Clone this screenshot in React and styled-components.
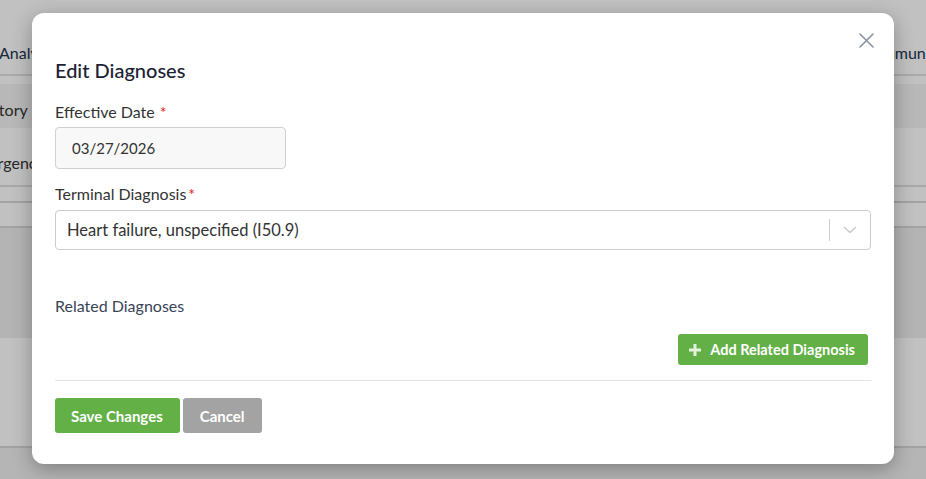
import React from 'react';
import styled, { createGlobalStyle } from 'styled-components';

const GlobalStyle = createGlobalStyle`
  html, body {
    margin: 0;
    padding: 0;
    width: 926px;
    height: 479px;
    overflow: hidden;
    font-family: Lato, "Open Sans", sans-serif;
  }
`;

const Page = styled.div`
  position: relative;
  width: 926px;
  height: 479px;
  overflow: hidden;
  background: #ffffff;
  color: #333;
`;

const Tabs = styled.div`
  display: grid;
  grid-template-columns: 862px auto;
  height: 76px;
  align-items: end;
  padding-bottom: 12px;
  border-bottom: 2px solid #e2e2e2;
  box-sizing: border-box;
  font-size: 16px;
  color: #22344f;
`;

const Tab = styled.div`
  white-space: nowrap;
  margin-left: ${(p) => p.$shift || 0}px;
`;

const SideRow = styled.div`
  height: ${(p) => p.$h}px;
  width: 100%;
  display: flex;
  align-items: center;
  padding-top: ${(p) => p.$pt || 0}px;
  background: ${(p) => p.$bg || 'transparent'};
  border-bottom: ${(p) => (p.$line ? '2px solid #e0e0e0' : 'none')};
  box-sizing: border-box;
  font-size: 16px;
  color: #333;
`;

const SideLabel = styled.span`
  margin-left: ${(p) => p.$shift}px;
  white-space: nowrap;
`;

const Band = styled.div`
  height: ${(p) => p.$h}px;
  background: ${(p) => p.$bg};
  border-bottom: ${(p) => (p.$line ? '2px solid #d8d8d8' : 'none')};
  box-sizing: border-box;
`;

const Backdrop = styled.div`
  position: absolute;
  inset: 0;
  background: rgba(0, 0, 0, 0.245);
`;

const Modal = styled.div`
  position: absolute;
  left: 32px;
  top: 13px;
  width: 862px;
  height: 451px;
  box-sizing: border-box;
  background: #fff;
  border-radius: 12px;
  box-shadow: 0 5px 20px rgba(0, 0, 0, 0.3);
  padding: 19px 20px 0 23px;
  display: flex;
  flex-direction: column;
`;

const CloseRow = styled.div`
  display: flex;
  justify-content: flex-end;
  height: 16px;
`;

const CloseButton = styled.button`
  border: none;
  background: none;
  padding: 0;
  width: 16px;
  height: 16px;
  display: flex;
  align-items: center;
  justify-content: center;
  color: #8a93a3;
  cursor: pointer;
`;

const Title = styled.h4`
  margin: 11px 0 0;
  font-size: 20px;
  font-weight: 500;
  line-height: 22px;
  color: #1a2233;
`;

const Body = styled.div`
  padding-right: 3px;
  display: flex;
  flex-direction: column;
`;

const Label = styled.label`
  display: block;
  font-size: 16px;
  line-height: 18px;
  color: #333;
  margin-top: ${(p) => p.$mt}px;
`;

const Required = styled.span`
  color: #e02020;
  margin-left: ${(p) => p.$gap}px;
`;

const DateInput = styled.div`
  margin-top: 6px;
  width: 231px;
  height: 42px;
  box-sizing: border-box;
  border: 1px solid #d0d0d0;
  border-radius: 4px;
  background: #f8f8f8;
  display: flex;
  align-items: center;
  padding-left: 16px;
  font-size: 15px;
  color: #333;
`;

const Select = styled.div`
  margin-top: 7px;
  height: 40px;
  box-sizing: border-box;
  border: 1px solid #cccccc;
  border-radius: 4px;
  background: #fff;
  display: flex;
  align-items: center;
`;

const SelectValue = styled.div`
  flex: 1;
  padding-left: 11px;
  font-size: 16.5px;
  color: #333;
`;

const Indicators = styled.div`
  display: flex;
  align-items: center;
  height: 100%;
`;

const Separator = styled.span`
  width: 1px;
  height: 22px;
  background: #cccccc;
`;

const Chevron = styled.span`
  width: 40px;
  display: flex;
  align-items: center;
  justify-content: center;
  color: #cccccc;
`;

const SectionLabel = styled.div`
  margin-top: 47px;
  font-size: 16px;
  line-height: 18px;
  color: #3a4457;
`;

const AddRow = styled.div`
  display: flex;
  justify-content: flex-end;
  margin-top: 19px;
  padding-right: 3px;
`;

const GreenButton = styled.button`
  display: flex;
  align-items: center;
  gap: 9px;
  height: ${(p) => p.$h}px;
  padding: 0 ${(p) => p.$pr}px 0 ${(p) => p.$pl}px;
  border: none;
  border-radius: 3px;
  background: ${(p) => (p.$muted ? '#a3a3a3' : '#62b046')};
  color: #fff;
  font-family: Lato, sans-serif;
  font-size: ${(p) => p.$fs || 14.5}px;
  font-weight: 700;
  cursor: pointer;
`;

const Divider = styled.hr`
  margin: 15px 0 0;
  border: none;
  border-top: 1px solid #e3e3e3;
`;

const Footer = styled.div`
  display: flex;
  gap: 3px;
  margin-top: 17px;
`;

const App = () => {
  return (
    <>
      <GlobalStyle />
      <Page>
        <Tabs>
          <Tab $shift={-1}>Analytics</Tab>
          <Tab>Communication</Tab>
        </Tabs>
        <SideRow $h={8} />
        <SideRow $h={44} $pt={6} $bg="#f4f4f4">
          <SideLabel $shift={-24}>History</SideLabel>
        </SideRow>
        <SideRow $h={59} $pt={12} $line>
          <SideLabel $shift={-33}>Emergency</SideLabel>
        </SideRow>
        <Band $h={16} $bg="#fff" $line />
        <Band $h={25} $bg="#fff" $line />
        <Band $h={110} $bg="#eeeeee" />
        <Band $h={110} $bg="#ffffff" $line />
        <Band $h={40} $bg="#f0f0f0" />
        <Backdrop />
        <Modal>
          <CloseRow>
            <CloseButton aria-label="Close">
              <svg width="15" height="15" viewBox="0 0 15 15" fill="none" stroke="currentColor" strokeWidth="1.6" strokeLinecap="round">
                <path d="M1 1L14 14M14 1L1 14" />
              </svg>
            </CloseButton>
          </CloseRow>
          <Title>Edit Diagnoses</Title>
          <Body>
            <Label $mt={22}>
              Effective Date<Required $gap={5}>*</Required>
            </Label>
            <DateInput>03/27/2026</DateInput>
            <Label $mt={16}>
              Terminal Diagnosis<Required $gap={2}>*</Required>
            </Label>
            <Select>
              <SelectValue>Heart failure, unspecified (I50.9)</SelectValue>
              <Indicators>
                <Separator />
                <Chevron>
                  <svg width="14" height="8" viewBox="0 0 14 8" fill="none" stroke="currentColor" strokeWidth="1.6" strokeLinecap="round" strokeLinejoin="round">
                    <path d="M1.5 1.5L7 6.5L12.5 1.5" />
                  </svg>
                </Chevron>
              </Indicators>
            </Select>
            <SectionLabel>Related Diagnoses</SectionLabel>
            <AddRow>
              <GreenButton $h={31} $pl={11} $pr={13}>
                <svg width="12" height="12" viewBox="0 0 12 12" fill="#e4f1de">
                  <path d="M4.5 0h3v4.5H12v3H7.5V12h-3V7.5H0v-3h4.5z" />
                </svg>
                Add Related Diagnosis
              </GreenButton>
            </AddRow>
            <Divider />
            <Footer>
              <GreenButton $h={35} $pl={16} $pr={17} $fs={15}>Save Changes</GreenButton>
              <GreenButton $h={35} $pl={17} $pr={17} $fs={15} $muted>Cancel</GreenButton>
            </Footer>
          </Body>
        </Modal>
      </Page>
    </>
  );
};

export default App;
